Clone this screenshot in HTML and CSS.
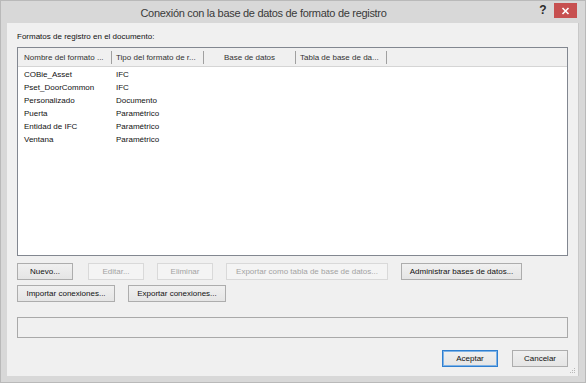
FILE: index.html
```html
<!DOCTYPE html>
<html lang="es">
<head>
<meta charset="utf-8">
<title>Conexión con la base de datos de formato de registro</title>
<link rel="stylesheet" href="styles.css">
</head>
<body>
<div class="window">
  <div class="titlebar">
    <div class="title">Conexión con la base de datos de formato de registro</div>
    <div class="help">?</div>
    <div class="close">
      <svg width="9" height="8" viewBox="0 0 9 8"><path d="M1.5 1 L7.5 7 M7.5 1 L1.5 7" stroke="#fff" stroke-width="1.6" fill="none"/></svg>
    </div>
  </div>
  <div class="client">
    <div class="label">Formatos de registro en el documento:</div>
    <div class="listbox">
      <div class="lhead">
        <div class="hcell">Nombre del formato ...</div>
        <div class="hcell">Tipo del formato de r...</div>
        <div class="hcell center">Base de datos</div>
        <div class="hcell">Tabla de base de da...</div>
      </div>
      <div class="lrow"><span class="c1">COBie_Asset</span><span class="c2">IFC</span></div>
      <div class="lrow"><span class="c1">Pset_DoorCommon</span><span class="c2">IFC</span></div>
      <div class="lrow"><span class="c1">Personalizado</span><span class="c2">Documento</span></div>
      <div class="lrow"><span class="c1">Puerta</span><span class="c2">Paramétrico</span></div>
      <div class="lrow"><span class="c1">Entidad de IFC</span><span class="c2">Paramétrico</span></div>
      <div class="lrow"><span class="c1">Ventana</span><span class="c2">Paramétrico</span></div>
    </div>
    <div class="btnrow row1">
      <button class="btn w56">Nuevo...</button>
      <button class="btn w56 ml15" disabled>Editar...</button>
      <button class="btn w56 ml13" disabled>Eliminar</button>
      <button class="btn w162 ml13" disabled>Exportar como tabla de base de datos...</button>
      <button class="btn w121 ml13">Administrar bases de datos...</button>
    </div>
    <div class="btnrow row2">
      <button class="btn w98">Importar conexiones...</button>
      <button class="btn w98 ml13">Exportar conexiones...</button>
    </div>
    <div class="status"></div>
    <div class="btnrow row3">
      <button class="btn w56 default">Aceptar</button>
      <button class="btn w56 ml14">Cancelar</button>
    </div>
    <div class="grip">
      <svg width="6" height="6" viewBox="0 0 6 6"><g fill="#b8b8b8"><rect x="4" y="0" width="1" height="1"/><rect x="2" y="2" width="1" height="1"/><rect x="4" y="2" width="1" height="1"/><rect x="0" y="4" width="1" height="1"/><rect x="2" y="4" width="1" height="1"/><rect x="4" y="4" width="1" height="1"/></g></svg>
    </div>
  </div>
</div>
</body>
</html>
```

FILE: styles.css
```css
html, body {
  margin: 0;
  padding: 0;
  background: #d8d8d8;
}
.window {
  width: 586px;
  height: 383px;
  box-sizing: border-box;
  border: 1px solid #b9b9b9;
  background: #d8d8d8;
  display: flex;
  flex-direction: column;
  font-family: "Liberation Sans", Arial, sans-serif;
  font-size: 8px;
  color: #000;
}
.titlebar {
  height: 22px;
  display: flex;
  align-items: center;
  position: relative;
}
.title {
  flex: 1;
  text-align: center;
  font-size: 11px;
  letter-spacing: -0.3px;
  color: #3a3a3a;
  padding-right: 10px;
  padding-top: 2px;
}
.help {
  width: 14px;
  font-size: 12px;
  font-weight: bold;
  color: #2a2a2a;
  text-align: center;
  margin-right: 4px;
  padding-bottom: 4px;
}
.close {
  width: 23px;
  height: 15px;
  background: #c75050;
  display: flex;
  align-items: center;
  justify-content: center;
  margin-right: 8px;
  margin-bottom: 3px;
}
.client {
  flex: 1;
  margin: 0 6px 6px 6px;
  background: #f0f0f0;
  border-right: 1px solid #c8c8c8;
  padding: 9px 10px 0 10px;
  display: flex;
  flex-direction: column;
  position: relative;
}
.label {
  height: 10px;
  line-height: 10px;
  margin-bottom: 5px;
  color: #111;
}
.listbox {
  height: 209px;
  box-sizing: border-box;
  border: 1px solid #828790;
  background: #fff;
}
.lhead {
  height: 19px;
  box-sizing: border-box;
  background: #f0f0f0;
  border-bottom: 1px solid #d5d5d5;
  display: grid;
  grid-template-columns: 94px 92px 92px 91px;
  align-items: stretch;
}
.hcell {
  margin: 3px 0 2px 0;
  border-right: 1px solid #a0a0a0;
  padding-left: 6px;
  line-height: 13px;
  color: #333;
  white-space: nowrap;
  overflow: hidden;
}
.hcell + .hcell { padding-left: 4px; }
.hcell.center { text-align: center; padding-left: 0; }
.lrow {
  height: 13px;
  line-height: 13px;
  display: grid;
  grid-template-columns: 94px 92px;
  color: #111;
}
.lhead + .lrow { margin-top: 1px; }
.c1 { padding-left: 6px; }
.c2 { padding-left: 4px; }
.btnrow {
  display: flex;
}
.row1 { margin-top: 7px; }
.row2 { margin-top: 5px; }
.row3 { margin-top: 12px; justify-content: flex-end; }
.btn {
  height: 17px;
  box-sizing: border-box;
  margin: 0;
  padding: 0;
  border: 1px solid #adadad;
  background: linear-gradient(#f0f0f0, #e5e5e5);
  font-family: "Liberation Sans", Arial, sans-serif;
  font-size: 8px;
  color: #111;
  text-align: center;
  white-space: nowrap;
}
.btn:disabled {
  border-color: #d9d9d9;
  background: #f4f4f4;
  color: #a3a3a3;
}
.btn.default {
  border-color: #2f7fd0;
  box-shadow: inset 0 0 0 1px #7fb3e6;
}
.w56 { width: 56px; }
.w98 { width: 98px; }
.w121 { width: 121px; }
.w162 { width: 162px; }
.ml13 { margin-left: 13px; }
.ml14 { margin-left: 14px; }
.ml15 { margin-left: 15px; }
.status {
  margin-top: 15px;
  height: 21px;
  box-sizing: border-box;
  border: 1px solid #a9a9a9;
  background: #f0f0f0;
}
.grip {
  position: absolute;
  right: 2px;
  bottom: 2px;
  line-height: 0;
}
```
